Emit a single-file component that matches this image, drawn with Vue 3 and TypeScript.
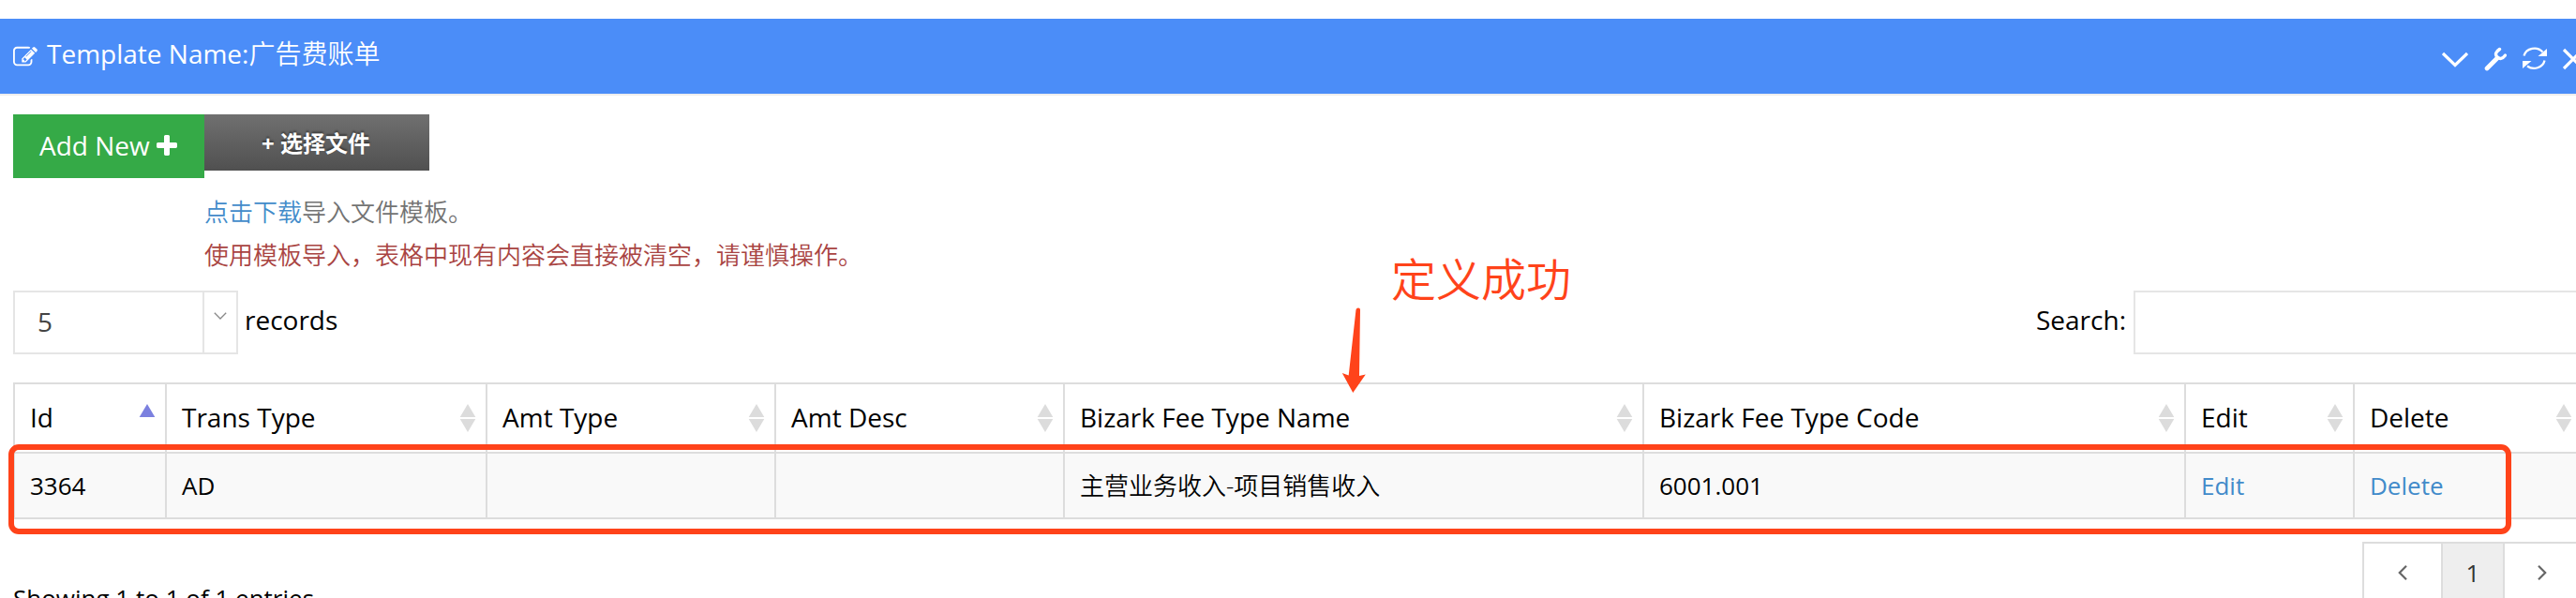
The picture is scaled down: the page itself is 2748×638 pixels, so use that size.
<script setup lang="ts">
interface Column {
  label: string
  width: number
  sorted?: boolean
}

const columns: Column[] = [
  { label: 'Id', width: 162, sorted: true },
  { label: 'Trans Type', width: 342 },
  { label: 'Amt Type', width: 308 },
  { label: 'Amt Desc', width: 308 },
  { label: 'Bizark Fee Type Name', width: 618 },
  { label: 'Bizark Fee Type Code', width: 578 },
  { label: 'Edit', width: 180 },
  { label: 'Delete', width: 244 },
]

const rows: string[][] = [
  ['3364', 'AD', '', '', '主营业务收入-项目销售收入', '6001.001', 'Edit', 'Delete'],
]

const isAction = (index: number): boolean => index >= 6
</script>

<template>
  <div class="page">
    <header class="title-bar">
      <div class="caption">
        <svg class="edit-icon" viewBox="0 0 1792 1792" fill="currentColor">
          <path d="M888 1184l116-116-152-152-116 116v56h96v96h56zM1328 464q-16-16-33 1l-350 350q-17 17-1 33t33-1l350-350q17-17 1-33zm80 594v190q0 119-84.500 203.500t-203.500 84.500h-832q-119 0-203.500-84.500t-84.500-203.500v-832q0-119 84.500-203.500t203.500-84.500h832q63 0 117 25 15 7 18 23 3 17-9 29l-49 49q-14 14-32 8-23-6-45-6h-832q-66 0-113 47t-47 113v832q0 66 47 113t113 47h832q66 0 113-47t47-113v-126q0-13 9-22l64-64q15-15 35-7t20 29zm-96-738l288 288-672 672h-288v-288zm444 132l-92 92-288-288 92-92q28-28 68-28t68 28l152 152q28 28 28 68t-28 68z" />
        </svg>
        <span class="caption-text">Template Name:<span class="cjk">广告费账单</span></span>
      </div>
      <div class="tools">
        <svg width="28" height="26" viewBox="0 0 28 26" fill="none" stroke="currentColor">
          <path d="M1 7L14 19.500L27 7" stroke-width="3.200" />
        </svg>
        <svg width="24" height="26" viewBox="0 0 24 26" fill="none" stroke="currentColor">
          <path d="M3 23L14 12" stroke-width="4.600" stroke-linecap="round" />
          <path d="M16.500 2.500Q10.500 6.500 13.500 10.500Q18 15 22.500 9" stroke-width="3.400" stroke-linecap="round" />
        </svg>
        <svg width="26" height="26" viewBox="0 0 26 26" fill="none" stroke="currentColor">
          <path d="M1.500 9.500A11.500 10.500 0 0 1 21.500 5.500M23.500 14.500A11.500 10.500 0 0 1 5 20.500" stroke-width="2.300" />
          <path d="M26 2V10H16.500ZM0 15H9.500L0 23Z" fill="currentColor" stroke="none" />
        </svg>
        <svg width="22" height="26" viewBox="0 0 22 26" fill="none" stroke="currentColor">
          <path d="M1 3L21 23M21 3L1 23" stroke-width="3.200" />
        </svg>
      </div>
    </header>

    <main class="body">
      <section class="toolbar">
        <button class="add-button" type="button">
          <span>Add New</span>
          <svg class="plus-icon" viewBox="192 128 1408 1408" fill="currentColor">
            <path d="M1600 736v192q0 40-28 68t-68 28h-416v416q0 40-28 68t-68 28h-192q-40 0-68-28t-28-68v-416h-416q-40 0-68-28t-28-68v-192q0-40 28-68t68-28h416v-416q0-40 28-68t68-28h192q40 0 68 28t28 68v416h416q40 0 68 28t28 68z" />
          </svg>
        </button>
        <div class="upload">
          <button class="file-button" type="button">+ 选择文件</button>
          <p class="hint"><a class="link">点击下载</a>导入文件模板。</p>
          <p class="hint warning">使用模板导入，表格中现有内容会直接被清空，请谨慎操作。</p>
        </div>
      </section>

      <section class="filters">
        <div class="length">
          <div class="select">
            <span class="select-value">5</span>
            <span class="select-arrow">
              <svg width="14" height="8" viewBox="0 0 14 8" fill="none" stroke="#888" stroke-width="1.300">
                <path d="M0.800 0.800L7 7L13.200 0.800" />
              </svg>
            </span>
          </div>
          <span>records</span>
        </div>
        <label class="search">
          <span>Search:</span>
          <span class="search-input"></span>
        </label>
      </section>

      <table class="grid">
        <colgroup>
          <col v-for="c in columns" :key="c.label" :style="{ width: c.width + 'px' }" />
        </colgroup>
        <thead>
          <tr>
            <th v-for="c in columns" :key="c.label">
              <div class="head">
                <span>{{ c.label }}</span>
                <svg class="sort" viewBox="0 0 18 30">
                  <path :class="c.sorted ? 'active' : 'idle'" d="M9 0L17.300 14H0.700Z" />
                  <path v-if="!c.sorted" class="idle" d="M0.700 16H17.300L9 30Z" />
                </svg>
              </div>
            </th>
          </tr>
        </thead>
        <tbody>
          <tr v-for="row in rows" :key="row[0]">
            <td v-for="(cell, i) in row" :key="i" :class="{ cjk: i === 4 }">
              <a v-if="isAction(i)" class="link">{{ cell }}</a>
              <template v-else>{{ cell }}</template>
            </td>
          </tr>
        </tbody>
      </table>

      <footer class="footer">
        <span class="info">Showing 1 to 1 of 1 entries</span>
        <nav class="pager">
          <span class="page-item prev">
            <svg width="10" height="16" viewBox="0 0 10 16" fill="none" stroke="#666" stroke-width="2.200"><path d="M9 0.800L1.800 8L9 15.200" /></svg>
          </span>
          <span class="page-item current">1</span>
          <span class="page-item next">
            <svg width="10" height="16" viewBox="0 0 10 16" fill="none" stroke="#666" stroke-width="2.200"><path d="M1 0.800L8.200 8L1 15.200" /></svg>
          </span>
        </nav>
      </footer>
    </main>

    <div class="highlight"></div>
    <div class="note">定义成功</div>
    <svg class="arrow" width="26" height="92" viewBox="0 0 26 92">
      <path d="M15.500 2.500Q16 0.500 18 0.500Q20 0.500 20 2.500L19 73L25.800 71.500L12.300 91L0.800 70L7.700 72.500Z" fill="#ff431a" />
    </svg>
  </div>
</template>

<style>
body {
  margin: 0;
  overflow: hidden;
}
</style>

<style scoped>
.page {
  position: relative;
  width: 2748px;
  height: 638px;
  overflow: hidden;
  box-sizing: border-box;
  padding-top: 20px;
  background: #fff;
  color: #000;
  font-family: "Open Sans", "Noto Sans CJK SC", sans-serif;
  font-size: 28px;
  line-height: 40px;
}

.title-bar {
  display: flex;
  justify-content: space-between;
  height: 80px;
  width: 2756px;
  box-sizing: content-box;
  border-bottom: 2px solid #eee;
  background: #4b8df8;
  color: #fff;
}

.caption {
  display: flex;
  padding: 17px 0 0 14px;
  gap: 10px;
  white-space: nowrap;
}

.edit-icon {
  width: 26px;
  height: 26px;
  margin-top: 11px;
}

.cjk {
  font-weight: 350;
}

.tools {
  display: flex;
  gap: 17px;
  padding: 30px 0 0;
}

.tools svg {
  flex: none;
}

.body {
  width: 2742px;
  padding: 20px 0 0 14px;
}

.toolbar {
  display: flex;
  align-items: flex-start;
  height: 188px;
}

button {
  border: 0;
  margin: 0;
  font-family: inherit;
  color: #fff;
}

.add-button {
  display: flex;
  width: 204px;
  height: 68px;
  padding: 13px 0 0 28px;
  gap: 7px;
  background: #35aa47;
  font-size: 28px;
  line-height: 40px;
  white-space: nowrap;
}

.plus-icon {
  width: 22px;
  height: 22px;
  margin-top: 9px;
}

.file-button {
  display: block;
  width: 240px;
  height: 60px;
  padding: 0 2px 0 0;
  background: linear-gradient(#707070, #505050);
  font-family: "Noto Sans", "Noto Sans CJK SC", sans-serif;
  font-size: 24px;
  font-weight: 700;
  line-height: 59px;
  text-shadow: 0 -2px 2px rgba(0, 0, 0, 0.4);
}

.hint {
  margin: 0;
  font-size: 26px;
  line-height: 46px;
  font-weight: 350;
  color: #737373;
  white-space: nowrap;
}

.file-button + .hint {
  margin-top: 21px;
}

.hint.warning {
  color: #a94442;
}

.link {
  color: #428bca;
}

.filters {
  display: flex;
  justify-content: space-between;
  height: 98px;
}

.length,
.search {
  display: flex;
  gap: 8px;
  line-height: 62px;
}

.length {
  gap: 7px;
}

.select {
  display: flex;
  box-sizing: border-box;
  width: 240px;
  height: 68px;
  border: 2px solid #e5e5e5;
}

.select-value {
  flex: 1;
  padding-left: 24px;
  color: #444;
}

.select-arrow {
  box-sizing: border-box;
  width: 36px;
  border-left: 2px solid #e5e5e5;
  display: flex;
  justify-content: center;
  padding-top: 21px;
}

.search-input {
  box-sizing: border-box;
  width: 480px;
  height: 68px;
  border: 2px solid #e5e5e5;
}

.grid {
  width: 2742px;
  table-layout: fixed;
  border-collapse: separate;
  border-spacing: 0;
  border-right: 2px solid #ddd;
  border-top: 2px solid #ddd;
}

th,
td {
  box-sizing: border-box;
  padding: 0 0 0 16px;
  border-left: 2px solid #ddd;
  border-bottom: 2px solid #ddd;
  text-align: left;
  font-weight: 400;
  white-space: nowrap;
}

th {
  height: 74px;
}

td {
  height: 70px;
  background: #f9f9f9;
  font-size: 26px;
}

td.cjk {
  font-weight: 350;
}

.head {
  display: flex;
  justify-content: space-between;
  align-items: center;
  height: 40px;
  padding: 0 10px 2px 0;
}

.sort {
  width: 18px;
  height: 30px;
  margin-top: 2px;
}

.idle {
  fill: #dcdcdc;
}

.active {
  fill: #7b80df;
}

.footer {
  display: flex;
  justify-content: space-between;
  align-items: flex-start;
  padding-top: 24px;
}

.info {
  padding-top: 40px;
  font-size: 26px;
}

.pager {
  display: flex;
  width: 236px;
  height: 68px;
  box-sizing: border-box;
  border: 2px solid #ddd;
}

.page-item {
  display: flex;
  align-items: center;
  justify-content: center;
  box-sizing: border-box;
  height: 62px;
  color: #333;
  font-size: 26px;
}

.prev {
  width: 82px;
}

.current {
  width: 68px;
  height: 66px;
  border-left: 2px solid #ddd;
  border-right: 2px solid #ddd;
  background: #eee;
  padding-bottom: 4px;
}

.next {
  width: 80px;
}

.highlight {
  position: absolute;
  left: 9px;
  top: 474px;
  width: 2670px;
  height: 96px;
  box-sizing: border-box;
  border: 6px solid #ff431a;
  border-radius: 11px;
}

.note {
  position: absolute;
  left: 1484px;
  top: 268px;
  font-size: 48px;
  font-weight: 350;
  line-height: 60px;
  color: #ff431a;
}

.arrow {
  position: absolute;
  left: 1431px;
  top: 328px;
}
</style>
